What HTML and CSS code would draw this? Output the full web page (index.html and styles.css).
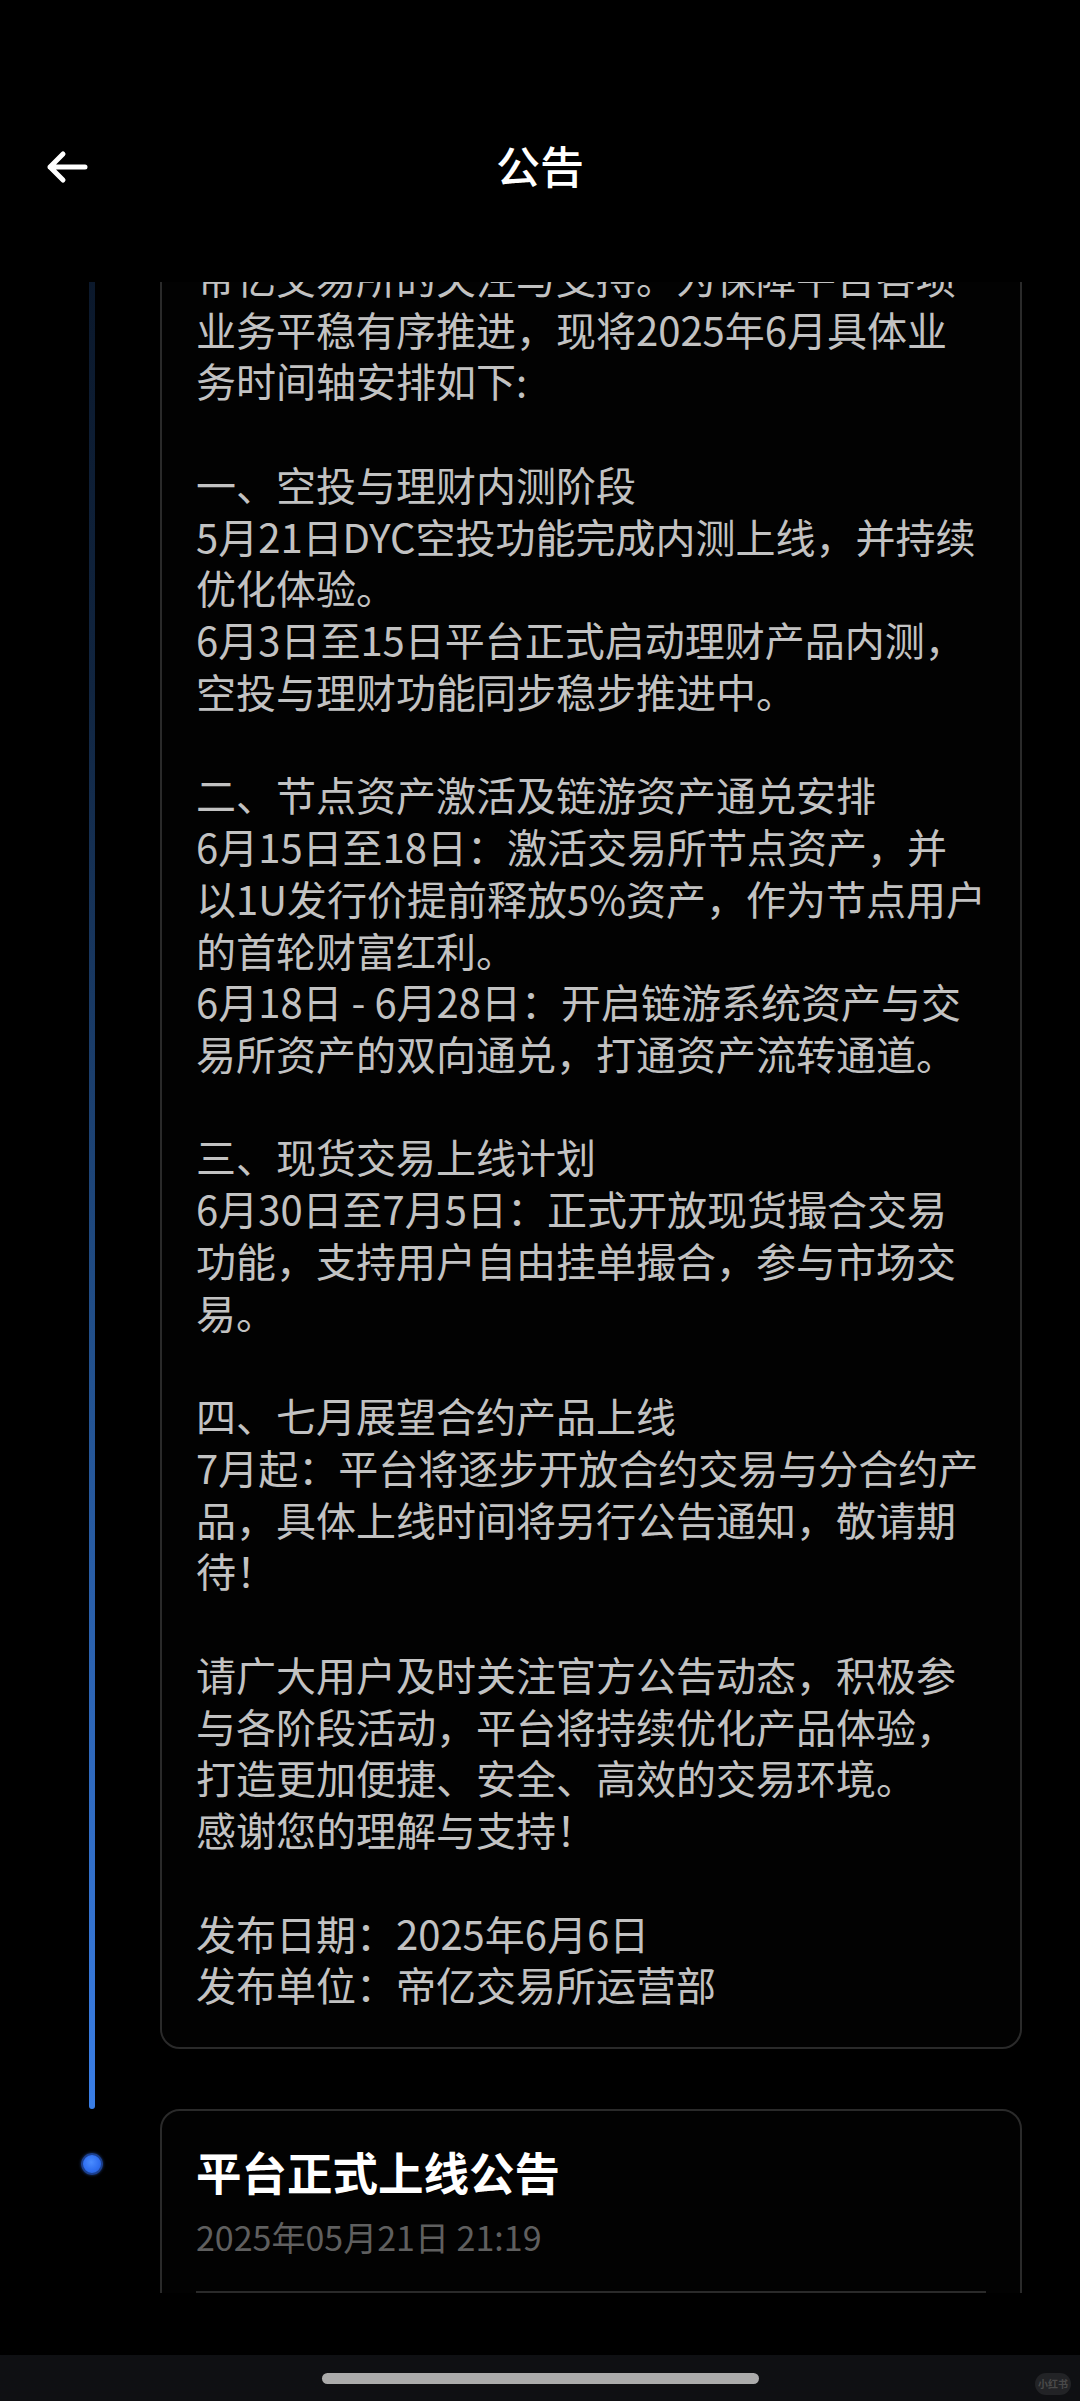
FILE: index.html
```html
<!DOCTYPE html>
<html lang="zh-CN">
<head>
<meta charset="utf-8">
<title>公告</title>
<link rel="stylesheet" href="styles.css">
</head>
<body>
<div class="screen">
  <header class="appbar">
    <div class="appbar-left">
      <svg class="back" viewBox="0 0 44 36" width="44" height="36" aria-hidden="true">
        <path d="M5 18 H40 M18 5 L5 18 L18 31" fill="none" stroke="#fff" stroke-width="5" stroke-linecap="round" stroke-linejoin="round"/>
      </svg>
    </div>
    <h1 class="title">公告</h1>
    <div class="appbar-right"></div>
  </header>

  <main class="viewport">
    <div class="timeline">
      <section class="item item-first">
        <div class="rail"><span class="line"></span></div>
        <article class="card">
          <div class="body">帝亿交易所的关注与支持。为保障平台各项<br>业务平稳有序推进，现将2025年6月具体业<br>务时间轴安排如下:<br><br>一、空投与理财内测阶段<br>5月21日DYC空投功能完成内测上线，并持续<br>优化体验。<br>6月3日至15日平台正式启动理财产品内测，<br>空投与理财功能同步稳步推进中。<br><br>二、节点资产激活及链游资产通兑安排<br>6月15日至18日：激活交易所节点资产，并<br>以1U发行价提前释放5%资产，作为节点用户<br>的首轮财富红利。<br>6月18日 - 6月28日：开启链游系统资产与交<br>易所资产的双向通兑，打通资产流转通道。<br><br>三、现货交易上线计划<br>6月30日至7月5日：正式开放现货撮合交易<br>功能，支持用户自由挂单撮合，参与市场交<br>易。<br><br>四、七月展望合约产品上线<br>7月起：平台将逐步开放合约交易与分合约产<br>品，具体上线时间将另行公告通知，敬请期<br>待！<br><br>请广大用户及时关注官方公告动态，积极参<br>与各阶段活动，平台将持续优化产品体验，<br>打造更加便捷、安全、高效的交易环境。<br>感谢您的理解与支持！<br><br>发布日期：2025年6月6日<br>发布单位：帝亿交易所运营部</div>
        </article>
      </section>

      <section class="item">
        <div class="rail"><span class="dot"></span></div>
        <article class="card card-open">
          <h2 class="card-title">平台正式上线公告</h2>
          <div class="card-date">2025年05月21日 21:19</div>
          <div class="divider"></div>
          <div class="body body-more">尊敬的用户：<br>帝亿交易所平台现已正式上线。</div>
        </article>
      </section>
    </div>
  </main>

  <div class="spacer"></div>

  <footer class="navbar">
    <span class="pill"></span>
    <span class="watermark">小红书</span>
  </footer>
</div>
</body>
</html>
```

FILE: styles.css
```css
html, body {
  margin: 0;
  padding: 0;
  background: #000;
}

body {
  font-family: "Noto Sans CJK SC", "Noto Sans", Roboto, sans-serif;
  color: #c4c4c4;
}

.screen {
  width: 1080px;
  height: 2401px;
  display: flex;
  flex-direction: column;
  overflow: hidden;
  background: #000;
}

/* ---------- app bar ---------- */
.appbar {
  height: 130px;
  margin-top: 100px;
  display: grid;
  grid-template-columns: 1fr auto 1fr;
  align-items: center;
  flex: none;
}

.appbar-left {
  padding-left: 45px;
  display: flex;
  align-items: center;
}

.back {
  display: block;
  margin-top: 4px;
}

.title {
  margin: 0;
  font-size: 44px;
  font-weight: 500;
  color: #fff;
  line-height: 60px;
  letter-spacing: 0;
}

/* ---------- scrolling viewport ---------- */
.viewport {
  margin-top: 52px;
  height: 2011px;
  overflow: hidden;
  flex: none;
}

.timeline {
  display: flex;
  flex-direction: column;
  margin-top: -66px;
}

.item {
  display: grid;
  grid-template-columns: 160px 862px;
}

.item-first .card {
  margin-bottom: 60px;
}

.rail {
  position: relative;
  display: flex;
  flex-direction: column;
  padding-left: 89px;
}

.line {
  display: block;
  width: 6px;
  flex: 1;
  border-radius: 3px;
  background: linear-gradient(to bottom, #0a1628 0%, #112540 25%, #22508c 60%, #3a7ee6 100%);
}

.dot {
  display: block;
  width: 18px;
  height: 18px;
  margin-top: 44px;
  margin-left: -8px;
  border-radius: 50%;
  background: radial-gradient(circle at 45% 40%, #4a8cff 0%, #2f6ff0 55%, #2558c8 100%);
  border: 2px solid #1b3f8e;
  box-shadow: 0 0 3px rgba(60, 120, 240, 0.5);
}

/* ---------- cards ---------- */
.card {
  border: 2px solid #2a2a2a;
  border-radius: 20px;
  padding: 34px 34px 36px 34px;
  background: #020202;
}

.body {
  font-size: 40px;
  line-height: 51.73px;
  color: #c2c2c2;
  white-space: nowrap;
}

.card-open {
  padding-top: 30px;
  padding-bottom: 200px;
}

.card-title {
  margin: 0;
  font-size: 45.5px;
  font-weight: 700;
  line-height: 60px;
  color: #fff;
}

.card-date {
  margin-top: 11px;
  font-size: 34px;
  line-height: 50px;
  color: #5f5f5f;
}

.divider {
  margin-top: 29px;
  height: 2px;
  background: #2a2a2a;
}

.body-more {
  margin-top: 40px;
}

/* ---------- bottom ---------- */
.spacer {
  height: 62px;
  flex: none;
}

.navbar {
  position: relative;
  height: 46px;
  background: #0f1013;
  display: flex;
  justify-content: center;
  flex: none;
}

.pill {
  display: block;
  width: 437px;
  height: 11px;
  margin-top: 18px;
  border-radius: 6px;
  background: #ababab;
}

.watermark {
  position: absolute;
  right: 9px;
  top: 18px;
  width: 36px;
  height: 22px;
  border-radius: 11px;
  background: #222326;
  color: #4a4a4a;
  font-size: 10px;
  line-height: 22px;
  text-align: center;
  font-weight: 700;
}
```
